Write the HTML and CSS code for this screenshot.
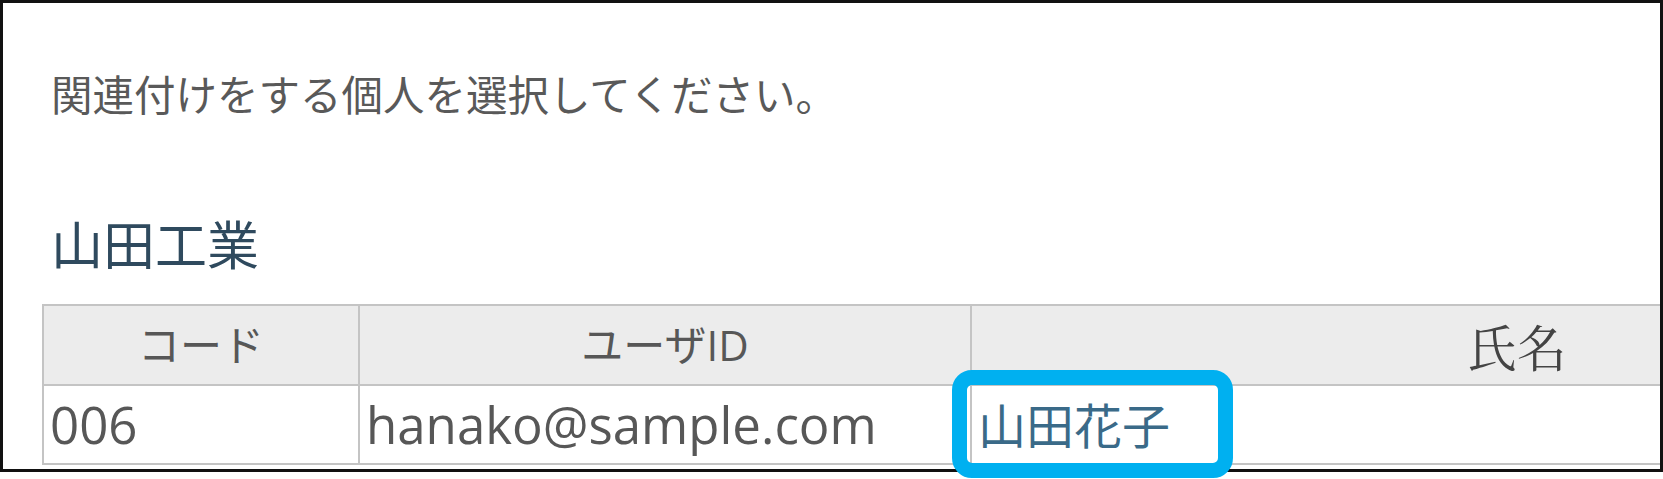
FILE: index.html
```html
<!DOCTYPE html>
<html lang="ja">
<head>
    <meta charset="UTF-8">
    <meta name="viewport" content="width=device-width, initial-scale=1.0">
    <title>個人の関連付け</title>
    <link rel="stylesheet" href="styles.css">
</head>
<body>
    <div class="frame">
        <p class="lead">関連付けをする個人を選択してください。</p>
        <h2 class="company">山田工業</h2>
        <table class="members">
            <thead>
                <tr>
                    <th class="col-code">コード</th>
                    <th class="col-user">ユーザID</th>
                    <th class="col-name name-head">氏名</th>
                </tr>
            </thead>
            <tbody>
                <tr>
                    <td>006</td>
                    <td>hanako@sample.com</td>
                    <td><a href="#" class="person">山田花子</a></td>
                </tr>
            </tbody>
        </table>
    </div>

    <!-- callout around the selectable name -->
    <div class="highlight"></div>
</body>
</html>
```

FILE: styles.css
```css
:root {
    --text-color: #575757;
    --heading-color: #2f4a5e;
    --link-color: #3a6a88;
    --line-color: #c4c4c4;
    --head-bg: #ececec;
    --callout: #00b0f0;
}

body {
    margin: 0;
    width: 1663px;
    height: 479px;
    overflow: hidden;
    position: relative;
    background-color: #fff;
    font-family: "Open Sans", "Noto Sans CJK JP", sans-serif;
    color: var(--text-color);
}

.frame {
    box-sizing: border-box;
    height: 472px;
    border: 3px solid #111;
    overflow: hidden;
    padding: 69px 0 0 39px;
}

.lead {
    margin: 0 0 0 9px;
    font-family: "Noto Sans CJK JP", sans-serif;
    font-size: 41.5px;
    line-height: 42px;
    color: #595959;
}

.company {
    margin: 103px 0 0 9px;
    font-family: "Noto Sans CJK JP", sans-serif;
    font-size: 52px;
    line-height: 52px;
    font-weight: normal;
    color: var(--heading-color);
}

.members {
    margin-top: 35px;
    width: 2022px;
    table-layout: fixed;
    border-collapse: separate;
    border-spacing: 0;
    border-top: 2px solid var(--line-color);
    border-left: 2px solid var(--line-color);
}

.members th,
.members td {
    box-sizing: border-box;
    border-right: 2px solid var(--line-color);
    border-bottom: 2px solid var(--line-color);
    padding: 0 0 0 6px;
    vertical-align: middle;
    white-space: nowrap;
    line-height: 1.2;
}

.members th {
    height: 80px;
    padding: 0;
    background-color: var(--head-bg);
    font-size: 42px;
    font-weight: normal;
    text-align: center;
}

.members td {
    height: 79px;
    font-size: 51px;
    text-align: left;
}

.col-code {
    width: 316px;
}

.col-user {
    width: 612px;
}

.col-name {
    width: 1092px;
}

.members .name-head {
    font-family: "Noto Serif CJK JP", "Noto Sans CJK JP", serif;
    font-size: 50px;
    color: #444;
}

.person {
    font-family: "Noto Sans CJK JP", sans-serif;
    font-size: 48px;
    color: var(--link-color);
    text-decoration: none;
}

.highlight {
    position: absolute;
    left: 952px;
    top: 370px;
    width: 281px;
    height: 108px;
    box-sizing: border-box;
    border: 15px solid var(--callout);
    border-radius: 20px;
}
```
